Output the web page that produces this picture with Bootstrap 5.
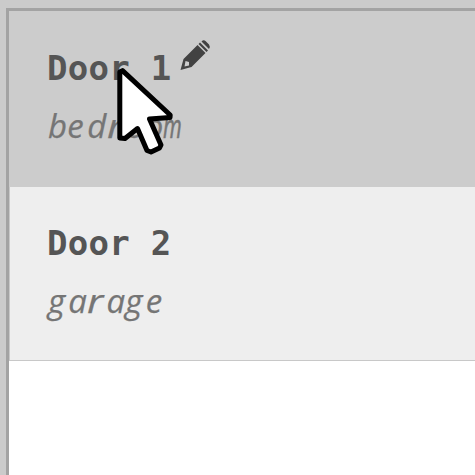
<!DOCTYPE html>
<html lang="en">
<head>
<meta charset="utf-8">
<meta name="viewport" content="width=device-width, initial-scale=1">
<title>Doors</title>
<link href="https://cdn.jsdelivr.net/npm/bootstrap@5.3.0/dist/css/bootstrap.min.css" rel="stylesheet">
<style>
body{background:#cbcbcb;height:100vh;padding:8px 0 0 6px}
.door-panel{border:solid #a3a3a3;border-width:3px 0 0 3px}
.door-item{height:174px;padding:34px 0 0 37px;background:#eee;border:solid #c8c8c8;border-width:0 0 1px 1px}
.door-item.selected{height:176px;padding-top:35px;background:#ccc;border-color:#ccc}
.door-name{font:700 34px/44px "DejaVu Sans Mono",monospace;letter-spacing:.28px;color:#555;white-space:pre}
.door-place{font:italic 400 33px/44px "Open Sans",sans-serif;color:#757575;letter-spacing:.2px;margin-top:14px;padding-left:1px;-webkit-text-stroke:.25px #757575}
.door-place .pitch-e{letter-spacing:3.6px}
.door-place .pitch-g{letter-spacing:3.2px}
.door-place .pitch-r{display:inline-block;width:19.3px;letter-spacing:0;transform:scaleX(1.25);transform-origin:0 50%}
.door-place .pitch-m{display:inline-block;letter-spacing:0;transform:scaleX(.65);transform-origin:0 50%;-webkit-text-stroke-width:.6px}
.pencil{margin:-7px 0 0 8px}
.pointer{left:115px;top:65px}
</style>
<script src="https://cdn.jsdelivr.net/npm/bootstrap@5.3.0/dist/js/bootstrap.bundle.min.js"></script>
</head>
<body class="overflow-hidden">
<main class="door-panel bg-white h-100">
  <section class="door-item selected">
    <div class="d-flex align-items-start">
      <div class="door-name">Door 1</div>
      <svg class="pencil" width="32" height="32" viewBox="0 0 32 32" aria-hidden="true">
        <path fill="#424242" fill-rule="evenodd" d="M.5 31 3.5 20 17.5 6 25.5 14 11.5 28ZM4.5 27.5 9 26.5 9 23 5.5 22Z"/>
        <path fill="#424242" d="M18.5 5 20 3.5 28 11.5 26.5 13ZM21.5 2.5Q23.5 .5 25.5 2L29 5.5Q30.5 7.5 29 10Z"/>
      </svg>
    </div>
    <div class="door-place">b<span class="pitch-e">e</span>d<span class="pitch-r">r</span>oo<span class="pitch-m">m</span></div>
  </section>
  <section class="door-item">
    <div class="door-name">Door 2</div>
    <div class="door-place"><span class="pitch-g">g</span>a<span class="pitch-r">r</span>a<span class="pitch-g">g</span><span class="pitch-e">e</span></div>
  </section>
</main>
<svg class="pointer position-absolute" width="60" height="92" viewBox="0 0 60 92" aria-hidden="true">
  <path fill="#fff" stroke="#000" stroke-width="5" stroke-linejoin="round" d="M4.8 7 7.5 5.6 55.2 50 55 52.5 34.5 54 46 80 44.5 83 36 87 32 85.5 22.5 63.5 10 73.5 4.8 73Z"/>
</svg>
</body>
</html>
